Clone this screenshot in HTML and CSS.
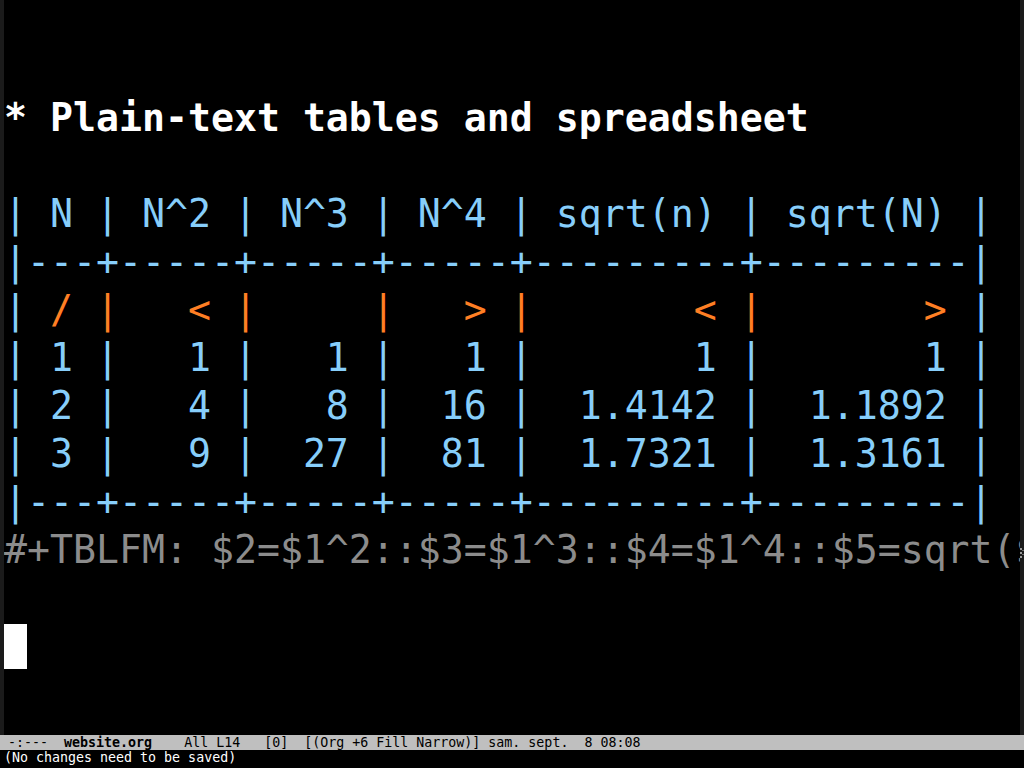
FILE: index.html
```html
<!DOCTYPE html>
<html>
<head>
<meta charset="utf-8">
<link rel="stylesheet" href="styles.css">
</head>
<body>
<div class="frame">
  <div class="window">
    <div class="fringe"></div>
    <div class="text">
      <div class="line"> </div>
      <div class="line"> </div>
      <div class="line heading">* Plain-text tables and spreadsheet</div>
      <div class="line"> </div>
      <div class="line table">| N | N^2 | N^3 | N^4 | sqrt(n) | sqrt(N) |</div>
      <div class="line table">|---+-----+-----+-----+---------+---------|</div>
      <div class="line table">|<span class="cookie"> / |   < |     |   > |       < |       > </span>|</div>
      <div class="line table">| 1 |   1 |   1 |   1 |       1 |       1 |</div>
      <div class="line table">| 2 |   4 |   8 |  16 |  1.4142 |  1.1892 |</div>
      <div class="line table">| 3 |   9 |  27 |  81 |  1.7321 |  1.3161 |</div>
      <div class="line table">|---+-----+-----+-----+---------+---------|</div>
      <div class="line meta">#+TBLFM: $2=$1^2::$3=$1^3::$4=$1^4::$5=sqrt($1)::$6=sqrt(sqrt($1))</div>
      <div class="line"> </div>
      <div class="line"><span class="cursor"></span></div>
    </div>
    <div class="fringe right">
      <svg class="trunc" width="4" height="12" viewBox="0 0 4 12"><rect x="0" y="1" width="2" height="2" fill="#9a9a9a"/><rect x="0" y="5" width="2" height="2" fill="#9a9a9a"/><rect x="0" y="9" width="2" height="2" fill="#9a9a9a"/><rect x="2" y="3" width="2" height="1" fill="#6a6a6a"/><rect x="2" y="7" width="2" height="1" fill="#6a6a6a"/></svg>
    </div>
  </div>
  <div class="modeline"> -:---  <b>website.org</b>    All L14   [0]  [(Org +6 Fill Narrow)] sam. sept.  8 08:08</div>
  <div class="echo">(No changes need to be saved)</div>
</div>
</body>
</html>
```
FILE: styles.css
```css
html, body {
  margin: 0;
  padding: 0;
  background: #000;
}
.frame {
  width: 1024px;
  height: 768px;
  display: flex;
  flex-direction: column;
  overflow: hidden;
  font-family: "DejaVu Sans Mono", monospace;
}
.window {
  height: 735px;
  display: flex;
  overflow: hidden;
}
.fringe {
  width: 4px;
  flex: none;
  background: #1b1b1b;
}
.fringe.right {
  padding-top: 547px;
  box-sizing: border-box;
}
.trunc {
  display: block;
}
.text {
  flex: 1;
  overflow: hidden;
  font-size: 38.2px;
}
.line {
  height: 48px;
  line-height: 45px;
  white-space: pre;
  overflow: hidden;
  color: #fff;
}
.heading {
  font-weight: bold;
  color: #ffffff;
}
.table {
  color: #87cefa;
}
.cookie {
  color: #ff7f24;
}
.meta {
  color: #8c8c8c;
}
.cursor {
  display: inline-block;
  width: 23px;
  height: 45px;
  background: #fff;
  vertical-align: top;
}
.modeline {
  height: 15px;
  line-height: 15px;
  background: #bfbfbf;
  color: #000;
  font-size: 13.3px;
  white-space: pre;
  overflow: hidden;
}
.modeline b {
  font-weight: bold;
}
.echo {
  flex: 1;
  padding-left: 4px;
  font-size: 13.3px;
  line-height: 16px;
  color: #ffffff;
  white-space: pre;
}
```
